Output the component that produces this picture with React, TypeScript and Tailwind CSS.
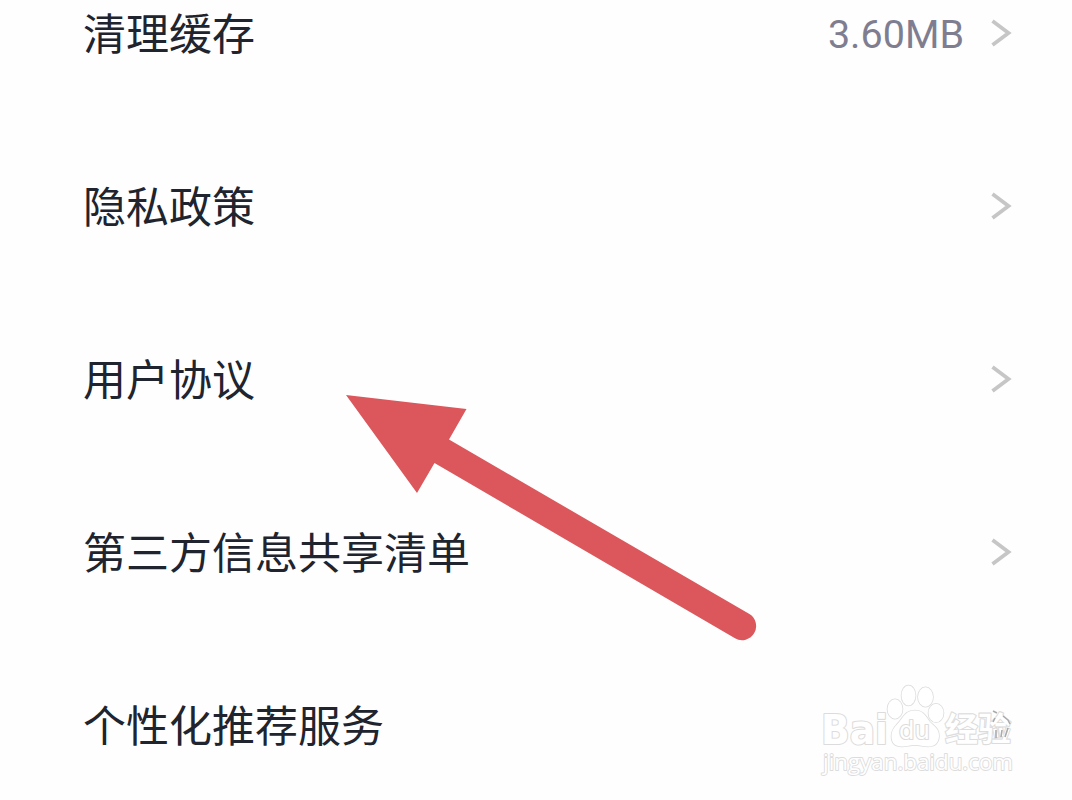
interface SettingItem {
  label: string;
  value?: string;
}

const items: SettingItem[] = [
  { label: "清理缓存", value: "3.60MB" },
  { label: "隐私政策" },
  { label: "用户协议" },
  { label: "第三方信息共享清单" },
  { label: "个性化推荐服务" },
];

function Chevron() {
  return (
    <svg className="h-7 w-6" viewBox="0 0 24 28" fill="none">
      <path d="M3.5 2 L19.5 14 L3.5 26" stroke="#c6c6c6" strokeWidth="3.8" />
    </svg>
  );
}

function SettingRow({ label, value }: SettingItem) {
  return (
    <li className="flex h-[173px] items-center justify-between pr-[59px] pl-[83px]">
      <span className="pb-[3px] text-[43px] leading-none text-[#20242f]">{label}</span>
      <div className="flex items-center gap-[25px]">
        {value && (
          <span className="pt-1 font-['Roboto'] text-[39.5px] leading-none text-[#7f7e91]">{value}</span>
        )}
        <Chevron />
      </div>
    </li>
  );
}

function Arrow() {
  return (
    <svg className="absolute top-0 left-0 h-[800px] w-[1072px]" viewBox="0 0 1072 800">
      <path
        d="M346 395 L466.5 409 L449 439.5 L749 613.8 A14 14 0 0 1 735 638.3 L434.5 463 L417 493 Z"
        fill="#db575c"
      />
    </svg>
  );
}

function Watermark() {
  return (
    <svg
      className="absolute top-[680px] left-[816px] h-[104px] w-[204px]"
      viewBox="816 680 204 104"
      fill="#fff"
      stroke="#dcdcdc"
      strokeWidth="2.2"
      strokeLinejoin="round"
      paintOrder="stroke"
    >
      <text x="821" y="744" fontSize="40" fontWeight="700" textLength="67" lengthAdjust="spacingAndGlyphs" className="font-['DejaVu_Sans']">
        Bai
      </text>
      <g strokeWidth="1.6">
        <ellipse cx="895" cy="709" rx="7.5" ry="9.7" />
        <ellipse cx="908.5" cy="695.5" rx="7" ry="10" />
        <ellipse cx="925.5" cy="697" rx="7.5" ry="9.7" />
        <ellipse cx="936" cy="713" rx="7.5" ry="9.3" />
        <path d="M915 710.5 C924 710.5 926 717 930 722 C935 727 939 729 939 736 C938.5 744 934 746.5 928 746.5 C923 746.5 920 745 915 745 C910 745 907 746.5 902 746.5 C895 746.5 891.5 743 891.5 736 C891.5 729 896 726 900 721 C904 716 906 710.5 915 710.5 Z" />
      </g>
      <text x="899" y="739" fontSize="24" textLength="31" lengthAdjust="spacingAndGlyphs" className="font-['DejaVu_Sans']">
        du
      </text>
      <text x="945" y="741" fontSize="33" fontWeight="700" textLength="66" className="font-['Noto_Sans_CJK_SC']">
        经验
      </text>
      {/* chevron of the last row, visible only between the strokes of 验 */}
      <path
        d="M993 711 L997 713 M1003 716 L1008 720 L1010 724 M995 718 L993 722 M996 730 V738 M1002 730 L1001 737 M1008 728 L1005 737"
        fill="none"
        stroke="#aaaaaa"
        strokeWidth="1.6"
      />
      <text x="823" y="770" fontSize="22" textLength="190" lengthAdjust="spacingAndGlyphs" strokeWidth="1.8" className="font-['Open_Sans']">
        jingyan.baidu.com
      </text>
    </svg>
  );
}

export default function App() {
  return (
    <div className="relative h-[800px] w-[1072px] overflow-hidden bg-[#fefefe] font-['Noto_Sans_CJK_SC',sans-serif]">
      <ul className="-mt-[54px]">
        {items.slice(0, 4).map((item) => (
          <SettingRow key={item.label} {...item} />
        ))}
        <li className="flex h-[173px] items-center pl-[83px]">
          <span className="pb-[3px] text-[43px] leading-none text-[#20242f]">{items[4].label}</span>
        </li>
      </ul>
      <Arrow />
      <Watermark />
    </div>
  );
}
